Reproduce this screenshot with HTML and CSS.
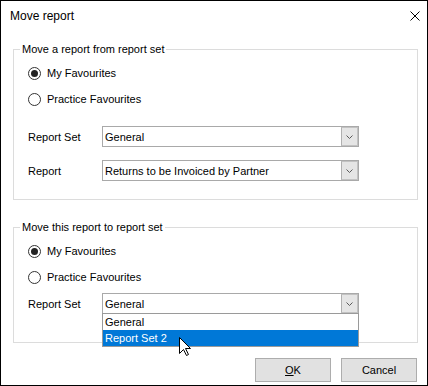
FILE: index.html
```html
<!DOCTYPE html>
<html lang="en">
<head>
  <meta charset="UTF-8">
  <meta name="viewport" content="width=device-width, initial-scale=1.0">
  <title>Move report</title>
  <link rel="stylesheet" href="styles.css">
</head>
<body>
  <div class="window">
    <div class="titlebar">
      <span class="title">Move report</span>
      <svg class="close" viewBox="0 0 10 10"><path d="M0.5 0.5L9.5 9.5M9.5 0.5L0.5 9.5"/></svg>
    </div>

    <fieldset class="group group-from">
      <legend>Move a report from report set</legend>
      <div class="group-body">
        <label class="radio-row"><span class="radio checked"></span>My Favourites</label>
        <label class="radio-row"><span class="radio"></span>Practice Favourites</label>

        <div class="field-row first">
          <span class="field-label">Report Set</span>
          <div class="combo">
            <span class="combo-value">General</span>
            <span class="combo-btn"><svg viewBox="0 0 7 4"><path d="M0.5 0.5L3.5 3.5L6.5 0.5"/></svg></span>
          </div>
        </div>

        <div class="field-row second">
          <span class="field-label">Report</span>
          <div class="combo">
            <span class="combo-value">Returns to be Invoiced by Partner</span>
            <span class="combo-btn"><svg viewBox="0 0 7 4"><path d="M0.5 0.5L3.5 3.5L6.5 0.5"/></svg></span>
          </div>
        </div>
      </div>
    </fieldset>

    <fieldset class="group group-to">
      <legend>Move this report to report set</legend>
      <div class="group-body">
        <label class="radio-row"><span class="radio checked"></span>My Favourites</label>
        <label class="radio-row"><span class="radio"></span>Practice Favourites</label>

        <div class="field-row tight">
          <span class="field-label">Report Set</span>
          <div class="combo open">
            <span class="combo-value">General</span>
            <span class="combo-btn"><svg viewBox="0 0 7 4"><path d="M0.5 0.5L3.5 3.5L6.5 0.5"/></svg></span>
            <ul class="combo-list">
              <li>General</li>
              <li class="selected">Report Set 2</li>
            </ul>
          </div>
        </div>
      </div>
    </fieldset>

    <div class="buttons">
      <button type="button"><u>O</u>K</button>
      <button type="button">Cancel</button>
    </div>

    <svg class="cursor" viewBox="0 0 12 19"><path d="M0.5 0.5L0.5 16.5L4.5 12.5L7.5 18.5L9.5 17.5L6.5 11.5L11.5 11.5Z"/></svg>
  </div>
</body>
</html>
```

FILE: styles.css
```css
* {
  box-sizing: border-box;
  margin: 0;
  padding: 0;
}

body {
  font-family: 'Liberation Sans', Arial, sans-serif;
  font-size: 11px;
  color: #000;
  background: #fff;
}

.window {
  position: relative;
  width: 428px;
  height: 386px;
  border: 1px solid #000;
  background: #fff;
  display: flex;
  flex-direction: column;
}

.titlebar {
  height: 29px;
  display: flex;
  align-items: center;
  justify-content: space-between;
  padding: 0 7px 0 9px;
}

.title {
  font-size: 12px;
}

.close {
  width: 10px;
  height: 10px;
  stroke: #000;
  stroke-width: 1;
  fill: none;
}

.group {
  border: 1px solid #dcdcdc;
  margin: 12px 9px 0 12px;
  padding: 0 0 18px 6px;
  min-width: 0;
}

.group-to {
  margin-top: 20px;
  padding-bottom: 28px;
}

.group legend {
  padding: 0 2px;
  line-height: 15px;
}

.group-body {
  padding-left: 8px;
  display: flex;
  flex-direction: column;
}

.radio-row {
  height: 20px;
  margin-top: 6px;
  display: flex;
  align-items: center;
}

.radio {
  width: 13px;
  height: 13px;
  border: 1px solid #333;
  border-radius: 50%;
  margin-right: 6px;
  display: flex;
  align-items: center;
  justify-content: center;
}

.radio.checked::after {
  content: "";
  width: 7px;
  height: 7px;
  border-radius: 50%;
  background: #222;
}

.field-row {
  height: 21px;
  display: flex;
  align-items: center;
}

.field-row.first {
  margin-top: 17px;
}

.field-row.second {
  margin-top: 13px;
}

.field-row.tight {
  margin-top: 6px;
}

.field-label {
  width: 74px;
}

.combo {
  position: relative;
  width: 257px;
  height: 21px;
  border: 1px solid #a9a9a9;
  background: #fff;
  display: flex;
  align-items: center;
}

.combo-value {
  flex: 1;
  padding-left: 2px;
  white-space: nowrap;
}

.combo-btn {
  width: 17px;
  height: 100%;
  background: #e5e5e5;
  border: 1px solid #c2c2c2;
  border-left-color: #b0b0b0;
  display: flex;
  align-items: center;
  justify-content: center;
}

.combo-btn svg {
  width: 7px;
  height: 4px;
  stroke: #5a5a5a;
  stroke-width: 1;
  fill: none;
}

.combo-list {
  list-style: none;
  position: absolute;
  top: 19px;
  left: -1px;
  right: -1px;
  border: 1px solid #9a9a9a;
  background: #fff;
  z-index: 2;
}

.combo-list li {
  height: 16px;
  line-height: 16px;
  padding-left: 2px;
}

.combo-list li.selected {
  background: #0078d7;
  color: #fff;
}

.buttons {
  display: flex;
  justify-content: flex-end;
  gap: 10px;
  margin-top: 15px;
  padding-right: 10px;
}

.buttons button {
  width: 76px;
  height: 24px;
  border: 1px solid #adadad;
  background: #e1e1e1;
  font-family: inherit;
  font-size: 11px;
  color: #000;
}

.cursor {
  position: absolute;
  left: 178px;
  top: 336px;
  width: 12px;
  height: 19px;
  fill: #fff;
  stroke: #000;
  stroke-width: 1;
  z-index: 3;
}
```
